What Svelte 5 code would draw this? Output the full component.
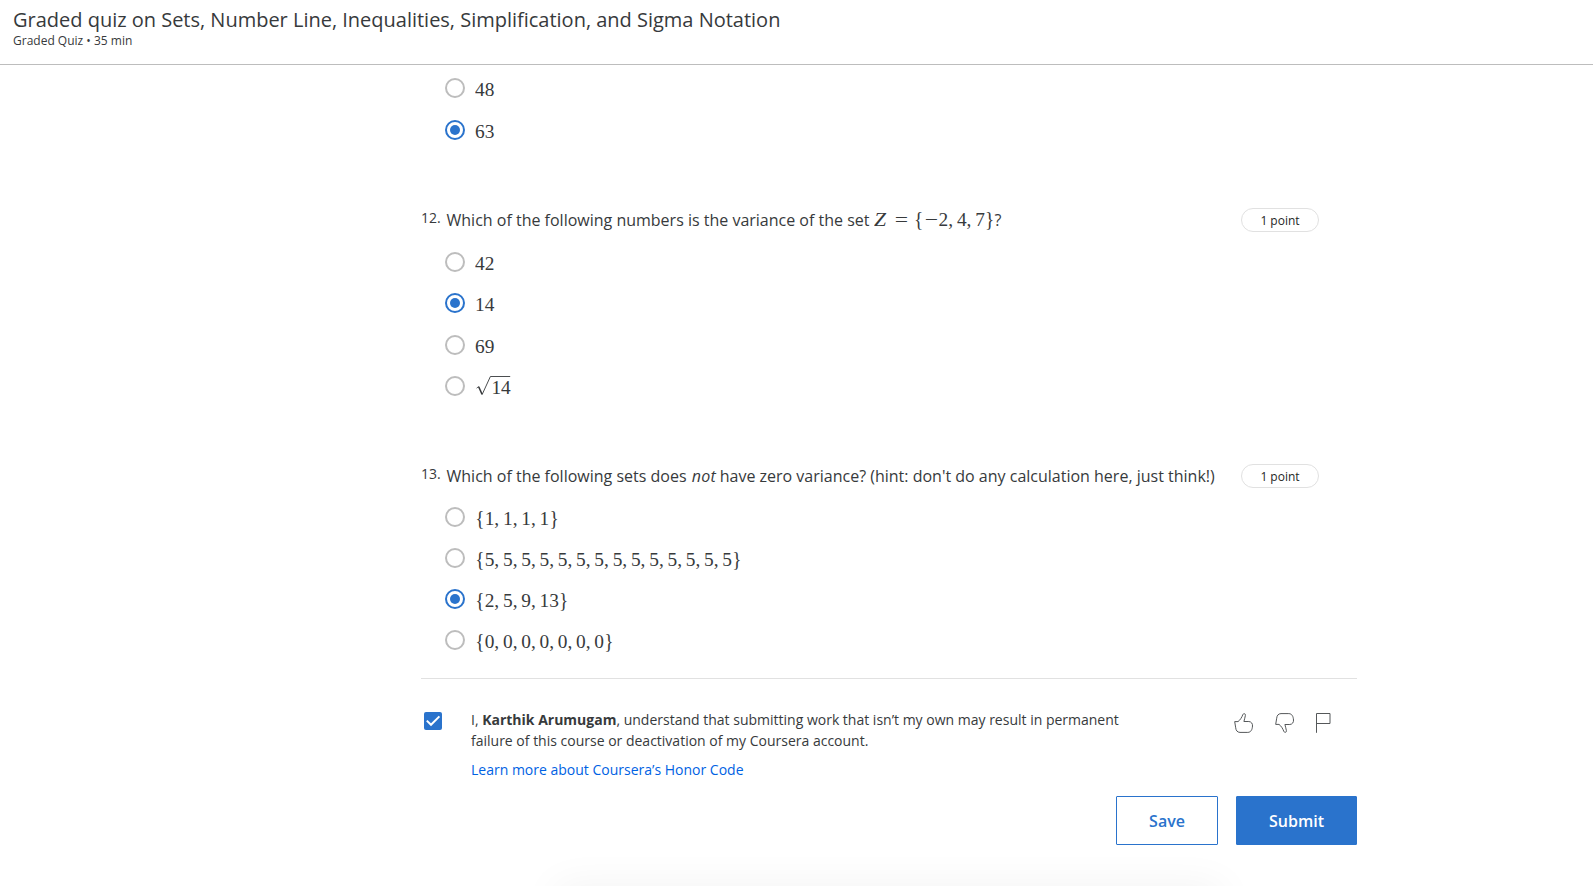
<script>
  const set = (s) => ['{', ...s, '}'];
  const previous = [
    { tokens: ['4', '8'] },
    { tokens: ['6', '3'], checked: true },
  ];
  const variance = [
    { tokens: ['4', '2'] },
    { tokens: ['1', '4'], checked: true },
    { tokens: ['6', '9'] },
    { tokens: ['1', '4'], root: true },
  ];
  const zero = [
    { tokens: set('1,1,1,1') },
    { tokens: set('5,5,5,5,5,5,5,5,5,5,5,5,5,5') },
    { tokens: set('2,5,9,13'), checked: true },
    { tokens: set('0,0,0,0,0,0,0') },
  ];
  const kind = (t) =>
    t === ',' ? 'comma' : t === '{' || t === '}' ? 'brace' : t === '−' ? 'minus' : t === '=' ? 'equals' : t === 'Z' ? 'var' : 'digit';
</script>

{#snippet math(tokens)}
  <span class="math">{#each tokens as t}<span class={kind(t)}><span class="glyph">{t}</span></span>{/each}</span>
{/snippet}

{#snippet options(list, cls)}
  <div class="options {cls}">
    {#each list as o}
      <div class="option">
        <span class="radio" class:checked={o.checked}></span>
        {#if o.root}
          <span class="root">
            <svg width="36" height="22" viewBox="0 0 36 22" fill="none" stroke="#373a3c">
              <path d="M1.6 13.2 L3.8 11.4" stroke-width=".8" />
              <path d="M3.7 11.7 L7 19.2" stroke-width="1.6" />
              <path d="M7 19.8 L15.4 1.5 H35.2" stroke-width=".9" />
            </svg>
            {@render math(o.tokens)}
          </span>
        {:else}
          {@render math(o.tokens)}
        {/if}
      </div>
    {/each}
  </div>
{/snippet}

<div class="page">
  <header>
    <h1>Graded quiz on Sets, Number Line, Inequalities, Simplification, and Sigma Notation</h1>
    <p>Graded Quiz • 35 min</p>
  </header>

  <main>
    {@render options(previous, 'wide')}

    <section>
      <div class="question">
        <span class="number">12.</span>
        <div class="prompt">Which of the following numbers is the variance of the set {@render math(['Z', '=', '{', '−', '2', ',', '4', ',', '7', '}'])}?</div>
        <span class="points">1 point</span>
      </div>
      {@render options(variance, 'medium')}
    </section>

    <section>
      <div class="question">
        <span class="number">13.</span>
        <div class="prompt">Which of the following sets does <em>not</em> have zero variance? (hint: don't do any calculation here, just think!)</div>
        <span class="points">1 point</span>
      </div>
      {@render options(zero, 'tight')}
    </section>

    <div class="honor">
      <span class="checkbox">
        <svg width="18" height="18" viewBox="0 0 18 18" fill="none" stroke="#fff" stroke-width="2"><path d="M2.8 8.6 L7 12.8 L15.4 4.4" /></svg>
      </span>
      <div class="statement">
        <p>I, <b>Karthik Arumugam</b>, understand that submitting work that isn’t my own may result in permanent failure of this course or deactivation of my Coursera account.</p>
        <a href="#honor">Learn more about Coursera’s Honor Code</a>
      </div>
      <div class="feedback">
        <svg width="20" height="22" viewBox="0 0 20 22"><path d="M.7 9.6 H4 C6 8.3 7.8 5.4 8.8 2.7 C9.3 1.1 11.7 1.3 11.4 3.4 C11.2 5.2 10.4 7.1 9.9 9.5 H14.8 C17.4 9.7 18.7 11.7 18.5 14 C18.3 17.5 17 20.3 13.8 20.4 H6 C3.2 20.3 2 18.5 1.7 15.8 Z" /></svg>
        <svg width="20" height="22" viewBox="0 0 20 22"><path d="M.7 12.4 H4 C6 13.7 7.8 16.6 8.8 19.3 C9.3 20.9 11.7 20.7 11.4 18.6 C11.2 16.8 10.4 14.9 9.9 12.5 H14.8 C17.4 12.3 18.7 10.3 18.5 8 C18.3 4.5 17 1.7 13.8 1.6 H6 C3.2 1.7 2 3.5 1.7 6.2 Z" /></svg>
        <svg width="16" height="22" viewBox="0 0 16 22"><path d="M1.5 20.8 V1.5 H15 V11.5 H1.5" /></svg>
      </div>
    </div>

    <div class="actions">
      <button class="save">Save</button>
      <button class="submit">Submit</button>
    </div>
  </main>
  <div class="shade"></div>
</div>

<style>
  :global(body) {
    margin: 0;
    background: #fff;
  }
  .page {
    position: relative;
    box-sizing: border-box;
    height: 886px;
    overflow: hidden;
    color: #373a3c;
    font-family: 'Open Sans', sans-serif;
    font-size: 16px;
  }
  header {
    box-sizing: border-box;
    height: 65px;
    padding: 7px 13px 0;
    border-bottom: 1px solid #bdbdbd;
  }
  h1 {
    margin: 0;
    font-size: 20px;
    font-weight: 400;
    line-height: 25px;
    letter-spacing: -0.01px;
  }
  header p {
    margin: 0;
    font-size: 12px;
    line-height: 17px;
  }
  main {
    width: 936px;
    margin-left: 421px;
    padding-top: 13px;
  }
  section {
    margin-top: 68px;
  }
  .question {
    display: flex;
    height: 24px;
    line-height: 24px;
    white-space: nowrap;
  }
  .number {
    width: 25.5px;
    font-size: 14px;
    line-height: 20px;
  }
  .prompt {
    width: 794.5px;
  }
  .prompt em {
    margin: 0 -0.5px 0 1px;
    letter-spacing: 0.3px;
  }
  .points {
    box-sizing: border-box;
    width: 78px;
    height: 24px;
    border: 1px solid #e1e1e1;
    border-radius: 12px;
    font-size: 12px;
    line-height: 23px;
    text-align: center;
    color: #1f1f1f;
  }
  .options {
    display: flex;
    flex-direction: column;
    padding-left: 24px;
  }
  .wide {
    gap: 22px;
  }
  .medium {
    gap: 21.33px;
    margin-top: 20px;
  }
  .tight {
    gap: 21px;
    margin-top: 19px;
  }
  .option {
    display: flex;
    align-items: center;
    gap: 10px;
    height: 20px;
  }
  .radio {
    box-sizing: border-box;
    display: flex;
    align-items: center;
    justify-content: center;
    width: 20px;
    height: 20px;
    border: 2px solid #bdbdbd;
    border-radius: 50%;
  }
  .checked {
    border-color: #2a73cc;
  }
  .checked::after {
    content: '';
    width: 10px;
    height: 10px;
    border-radius: 50%;
    background: #2a73cc;
  }
  .math {
    font-family: 'Liberation Serif', serif;
    font-size: 19.36px;
    line-height: 20px;
    white-space: nowrap;
  }
  .prompt .math {
    margin-left: 0.5px;
  }
  .option .math {
    padding-top: 4px;
  }
  .tight .math {
    padding-top: 5px;
  }
  .option .root .math {
    padding-top: 2px;
  }
  .math span {
    display: inline-block;
  }
  .digit,
  .brace {
    width: 0.5em;
    text-align: center;
  }
  .digit .glyph {
    transform: scaleY(0.97);
    transform-origin: 50% 80%;
  }
  .brace .glyph {
    transform: scaleY(1.08);
  }
  .comma {
    width: 0.4447em;
  }
  .minus,
  .equals {
    width: 0.778em;
    text-align: center;
  }
  .minus .glyph,
  .equals .glyph {
    transform: scaleX(1.22);
  }
  .equals {
    margin: 0 0.278em;
  }
  .var {
    width: 0.72em;
    font-style: italic;
  }
  .var .glyph {
    transform: scaleX(1.12);
    transform-origin: left;
  }
  .root {
    display: flex;
    height: 20px;
    padding-left: 16.4px;
  }
  .root svg {
    flex: none;
    margin: -1px -20px 0 -16px;
  }
  .honor {
    display: flex;
    height: 117px;
    margin-top: 28px;
    box-sizing: border-box;
    border-top: 1px solid #e1e1e1;
  }
  .checkbox {
    width: 18px;
    height: 18px;
    margin: 33px 29px 0 3px;
    border-radius: 2px;
    background: #2a73cc;
  }
  .checkbox svg {
    display: block;
  }
  .statement {
    width: 664px;
    padding-top: 30px;
    font-size: 14px;
    line-height: 21px;
  }
  .statement p {
    margin: 0;
  }
  .statement a {
    display: block;
    margin-top: 8px;
    color: #0062e3;
    text-decoration: none;
  }
  .feedback {
    display: flex;
    gap: 21px;
    margin: 33px 0 0 99px;
  }
  .feedback svg {
    fill: none;
    stroke: #55585a;
    stroke-width: 1;
  }
  .feedback svg:last-child {
    margin-left: -1px;
  }
  .actions {
    display: flex;
    justify-content: flex-end;
    gap: 18px;
    margin-top: 1px;
  }
  button {
    box-sizing: border-box;
    height: 49px;
    padding: 1px 0 0;
    border: 1px solid #2a73cc;
    border-radius: 1px;
    font: 600 16px/46px 'Open Sans', sans-serif;
  }
  .save {
    width: 102px;
    background: #fff;
    color: #2a73cc;
  }
  .submit {
    width: 121px;
    background: #2a73cc;
    color: #fff;
  }
  .shade {
    position: absolute;
    left: 566px;
    bottom: -30px;
    width: 646px;
    height: 20px;
    box-shadow: 0 0 42px 10px rgba(0, 0, 0, 0.055);
  }
</style>
